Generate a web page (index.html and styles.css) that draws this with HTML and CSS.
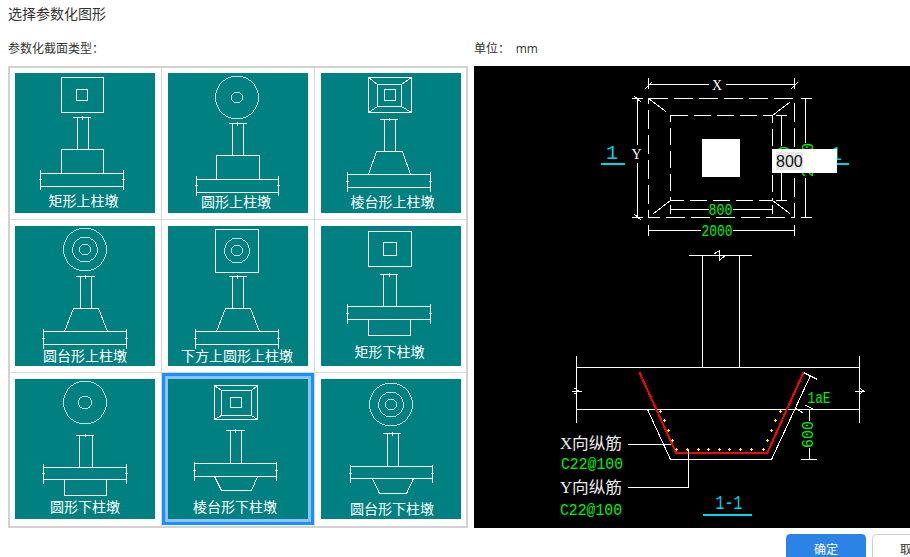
FILE: index.html
```html
<!DOCTYPE html>
<html lang="zh-CN">
<head>
<meta charset="utf-8">
<title>选择参数化图形</title>
<link rel="stylesheet" href="styles.css">
</head>
<body>
<div class="dialog">
  <div class="title">选择参数化图形</div>
  <div class="main">
    <section class="left">
      <div class="label">参数化截面类型<span class="colon">：</span></div>
      <div class="grid">
        <div class="cell"><div class="tile"><svg class="art" viewBox="0 0 140 140" width="140" height="140">
          <path class="cad" d="M46.5 4.5h42v35h-42z M61.5 16.5h11v11h-11z M58 44.5h18 M67 43v4 M62.5 44.5v32 M73.5 44.5v32 M46.5 76.5h42v24h-42z M25.5 100.5h83v13h-83z M25.5 97v20 M108.5 97v20 M24 106.5h3 M107 106.5h3"/>
          <text class="cap" x="68.5" y="127">矩形上柱墩</text></svg></div></div>
        <div class="cell"><div class="tile"><svg class="art" viewBox="0 0 140 140" width="140" height="140">
          <circle class="cad ring" cx="69" cy="24.5" r="21.5"/><circle class="cad ring" cx="69" cy="24.5" r="5.5"/>
          <path class="cad" d="M60.5 50.5h18 M69.5 49v4 M64.5 50.5v32 M75.5 50.5v32 M48.5 82.5h43v24h-43z M28.5 106.5h82v13h-82z M28.5 103v20 M110.5 103v20 M27 112.5h3 M109 112.5h3"/>
          <text class="cap" x="68" y="128">圆形上柱墩</text></svg></div></div>
        <div class="cell"><div class="tile"><svg class="art" viewBox="0 0 140 140" width="140" height="140">
          <path class="cad" d="M47.5 4.5h43v35h-43z M56.5 11.5h24v22h-24z M63.5 16.5h11v11h-11z M47.5 4.5l9 7 M90.5 4.5l-10 7 M47.5 39.5l9-6 M90.5 39.5l-10-6 M59 46.5h18 M68 45v3 M63.5 46.5v32 M74.5 46.5v32 M55.5 78.5h26l8 23h-42z M26.5 101.5h83v13h-83z M26.5 99v20 M109.5 99v20 M25 108.5h3 M108 108.5h3"/>
          <text class="cap" x="71.5" y="128">棱台形上柱墩</text></svg></div></div>

        <div class="cell"><div class="tile"><svg class="art" viewBox="0 0 140 140" width="140" height="140">
          <circle class="cad ring" cx="70" cy="23.5" r="21.5"/><circle class="cad ring" cx="70" cy="23.5" r="12.5"/><circle class="cad ring" cx="70" cy="23.5" r="5.5"/>
          <path class="cad" d="M61 50.5h19 M70.5 49v4 M65.5 50.5v32 M76.5 50.5v32 M58.5 82.5h25l9 23h-43z M28.5 105.5h83v13h-83z M28.5 103v20 M111.5 103v20 M27 112.5h3 M110 112.5h3"/>
          <text class="cap" x="70" y="129">圆台形上柱墩</text></svg></div></div>
        <div class="cell"><div class="tile"><svg class="art" viewBox="0 0 140 140" width="140" height="140">
          <path class="cad" d="M47.5 3.5h43v43h-43z"/>
          <circle class="cad ring" cx="69" cy="24.5" r="12.5"/><circle class="cad ring" cx="69" cy="24.5" r="5.5"/>
          <path class="cad" d="M60.5 50.5h18 M69.5 49v4 M64.5 50.5v32 M75.5 50.5v32 M57.5 82.5h25l9 23h-43z M27.5 105.5h83v13h-83z M27.5 103v20 M110.5 103v20 M26 112.5h3 M109 112.5h3"/>
          <text class="cap" x="69" y="129">下方上圆形上柱墩</text></svg></div></div>
        <div class="cell"><div class="tile"><svg class="art" viewBox="0 0 140 140" width="140" height="140">
          <path class="cad" d="M47.5 5.5h43v35h-43z M62.5 16.5h13v13h-13z M59 48.5h18 M68 47v4 M62.5 48.5v32 M75.5 48.5v32 M26.5 80.5h83v13h-83z M26.5 77.5v20 M109.5 77.5v20 M25 87.5h3 M108 87.5h3 M47.5 93.5v16h42v-16"/>
          <text class="cap" x="68.5" y="125">矩形下柱墩</text></svg></div></div>

        <div class="cell"><div class="tile"><svg class="art" viewBox="0 0 140 140" width="140" height="140">
          <circle class="cad ring" cx="70" cy="23.5" r="21.5"/><circle class="cad ring" cx="70" cy="23.5" r="6.5"/>
          <path class="cad" d="M61 56.5h18 M70 55v3 M64.5 56.5v32 M77.5 56.5v32 M28.5 88.5h83v12h-83z M28.5 84.5v20 M111.5 84.5v20 M27 94.5h3 M110 94.5h3 M49.5 100.5v16h42v-16"/>
          <text class="cap" x="70" y="127">圆形下柱墩</text></svg></div></div>
        <div class="cell"><div class="tile selected"><svg class="art" viewBox="0 0 140 140" width="140" height="140">
          <path class="cad" d="M46.5 6.5h43v34h-43z M53.5 11.5h30v25h-30z M62.5 18.5h11v10h-11z M46.5 6.5l7 5 M89.5 6.5l-6 5 M46.5 40.5l7-4 M89.5 40.5l-6-4 M58 51.5h19 M67.5 50v4 M62.5 51.5v33 M73.5 51.5v33 M26.5 84.5h82v13h-82z M26.5 82.5v19 M108.5 82.5v19 M25 91.5h3 M107 91.5h3 M46.5 97.5l7 14h30l6-14"/>
          <text class="cap" x="67" y="127">棱台形下柱墩</text></svg></div></div>
        <div class="cell"><div class="tile"><svg class="art" viewBox="0 0 140 140" width="140" height="140">
          <circle class="cad ring" cx="70" cy="25.5" r="21.5"/><circle class="cad ring" cx="70" cy="25.5" r="12.5"/><circle class="cad ring" cx="70" cy="25.5" r="5.5"/>
          <path class="cad" d="M62 54.5h18 M71 53v4 M66.5 54.5v33 M77.5 54.5v33 M29.5 87.5h82v12h-82z M29.5 85.5v18 M111.5 85.5v18 M28 94.5h3 M110 94.5h3 M51.5 99.5l7 15h27l7-15"/>
          <text class="cap" x="71" y="129">圆台形下柱墩</text></svg></div></div>
      </div>
    </section>
    <section class="right">
      <div class="label">单位<span class="colon">：</span> <span class="unit">mm</span></div>
      <svg class="preview" viewBox="474 66 436 462" width="436" height="462">
        <!-- plan view -->
        <path class="wire" d="M648.5 84.5h60 M725.5 84.5h69 M648.5 78v11 M794.5 78v11 M645 89l7-7 M791 89l7-7"/>
        <text class="serif" x="717" y="85">X</text>
        <path class="wire dash" d="M648.5 98.5h146v119h-146z"/>
        <path class="wire dash-small" d="M670.5 115.5h102v85h-102z"/>
        <path class="wire" d="M648.5 98.5l17.5 13 M790 102l-17.5 13.5 M670.5 200.5l-17 13 M772.5 200.5l17.5 13"/>
        <path class="wire" d="M637.5 98.5v46 M637.5 163v54.5 M632 98.5h11 M632 217.5h11 M634 96l7 6 M634 214l7 6"/>
        <text class="serif" x="636.5" y="154">Y</text>
        <path class="cyan" d="M601 164h24 M836.5 164h12.5"/>
        <text class="cyan-text" x="612" y="153">1</text>
        <text class="cyan-text" x="836" y="154">1</text>
        <path class="wire" d="M781 115.5v30 M781 172v28.500 M776 115.500h11 M776 200.500h11 M805.500 98.500v44 M805.500 178v39.500 M800.500 98.500h11 M800.500 217.500h11"/>
        <text class="green" transform="translate(784 159) rotate(-90)" x="0" y="0" textLength="26" lengthAdjust="spacingAndGlyphs">800</text>
        <text class="green" transform="translate(808 160) rotate(-90)" x="0" y="0" textLength="34" lengthAdjust="spacingAndGlyphs">2000</text>
        <rect class="fill-white" x="702" y="139" width="38" height="38"/>
        <rect class="fill-white" x="772" y="149" width="65" height="24"/>
        <rect class="fill-hl" x="776" y="152" width="27" height="18"/>
        <text class="input-text" x="776" y="161">800</text>
        <path class="wire" d="M670.500 209.500h38 M733 209.500h39.500 M670.500 205v9 M772.500 205v9"/>
        <text class="green" x="720.500" y="210" textLength="24" lengthAdjust="spacingAndGlyphs">800</text>
        <path class="wire" d="M648.500 230.500h52 M733 230.500h61.500 M648.500 225v11 M794.500 225v11"/>
        <text class="green" x="717" y="231" textLength="31" lengthAdjust="spacingAndGlyphs">2000</text>
        <!-- section view -->
        <path class="wire" d="M689 255.500h63 M702.500 255.500v112 M739.500 255.500v112 M714 254l5.500-3.500v10l5.500-5"/>
        <path class="wire" d="M576.500 367.500h283 M576.500 409.500h283 M576.500 356v67 M859.500 356v67 M572 391h10 M574 388l5 3-5 3 M855 391h10 M859 388l5 3-5 3"/>
        <path class="wire" d="M647.500 409.500l23 50h101l39-84 M803.500 372.500l14 7"/>
        <path class="red" d="M639.500 372.500l36.500 80h91.500l36-80"/>
        <path class="yellow" d="M659 411.500h3M660.500 410v3M663 420.500h3M664.500 419v3M667 430.500h3M668.500 429v3M671 440.500h3M672.500 439v3M675 449.500h3M676.500 448v3M686 449.500h3M687.500 448v3M697 449.500h3M698.500 448v3M707 449.500h3M708.500 448v3M718 449.500h3M719.500 448v3M728 449.500h3M729.500 448v3M739 449.500h3M740.500 448v3M750 449.500h3M751.500 448v3M762 449.500h3M763.500 448v3M766 440.500h3M767.500 439v3M770 430.500h3M771.500 429v3M774 420.500h3M775.500 419v3M779 411.500h3M780.500 410v3"/>
        <path class="wire" d="M627.500 444.500h43.500 M627.500 487.500h60.500v-38"/>
        <path class="wire" d="M809.500 409.500v11 M809.500 448v11.500 M800.500 459.500h16 M795 408l8 5 M805 405l8 4"/>
        <text class="green" transform="translate(808 434.500) rotate(-90)" x="0" y="0" textLength="27" lengthAdjust="spacingAndGlyphs">600</text>
        <text class="green" x="819" y="398" textLength="23" lengthAdjust="spacingAndGlyphs">1aE</text>
        <text class="note" x="591" y="443" textLength="62" lengthAdjust="spacingAndGlyphs">X向纵筋</text>
        <text class="green" x="592" y="464" textLength="62" lengthAdjust="spacingAndGlyphs">C22@100</text>
        <text class="note" x="591" y="487" textLength="62" lengthAdjust="spacingAndGlyphs">Y向纵筋</text>
        <text class="green" x="591" y="510" textLength="62" lengthAdjust="spacingAndGlyphs">C22@100</text>
        <text class="cyan-text" x="729" y="503" textLength="27" lengthAdjust="spacingAndGlyphs">1-1</text>
        <path class="cyan" d="M703 515h49"/>
      </svg>
    </section>
  </div>
  <div class="footer">
    <button class="btn primary">确定</button>
    <button class="btn">取消</button>
  </div>
</div>
</body>
</html>
```

FILE: styles.css
```css
* { box-sizing: border-box; }
html, body { margin: 0; padding: 0; background: #fff; }
body { width: 910px; height: 557px; overflow: hidden; font-family: "Noto Sans CJK SC", "Liberation Sans", sans-serif; color: #333; }
.dialog { width: 910px; height: 557px; overflow: hidden; display: flex; flex-direction: column; }
.title { height: 28px; line-height: 26px; font-size: 14px; padding-left: 8px; margin-bottom: 12px; flex: none; }
.main { display: flex; gap: 6px; padding-left: 8px; flex: none; }
.label { height: 16px; line-height: 16px; font-size: 12px; margin-bottom: 10px; white-space: pre; }
.colon { font-family: "Noto Sans CJK TC", sans-serif; }
.unit { margin-left: 3px; font-family: "Open Sans", "Liberation Sans", sans-serif; }
.left { width: 460px; flex: none; }
.right { width: 436px; flex: none; }
.grid { width: 460px; height: 462px; border: 2px solid #d2d2d2; display: grid; grid-template-columns: 152px 153px 151px; grid-template-rows: 152px 153px 153px; }
.cell { padding: 6px 0 0 6px; border-right: 1px solid #d6d6d6; border-bottom: 1px solid #d6d6d6; }
.cell:nth-child(3n+1) { padding-left: 5px; }
.cell:nth-child(3n) { border-right: 0; }
.cell:nth-child(-n+3) { padding-top: 5px; }
.cell:nth-child(n+7) { border-bottom: 0; }
.tile { width: 140px; height: 140px; background: #008080; }
.tile.selected { box-shadow: 0 0 0 3px #8cc4ff, 0 0 0 6px #1890ff; position: relative; }
.art { display: block; }
.cad { fill: none; stroke: #fff; stroke-width: 1; shape-rendering: crispEdges; }
.ring { stroke-width: 0.75; }
.cap { fill: #fff; font-size: 14px; text-anchor: middle; dominant-baseline: central; font-family: "Noto Sans CJK SC", sans-serif; }
.preview { display: block; background: #000; }
.wire { fill: none; stroke: #fff; stroke-width: 1; shape-rendering: crispEdges; }
.dash { stroke-dasharray: 19 6; }
.dash-small { stroke-dasharray: 17 6; }
.cyan { fill: none; stroke: #00d4e6; stroke-width: 2; shape-rendering: crispEdges; }
.red { fill: none; stroke: #f00; stroke-width: 2; shape-rendering: crispEdges; }
.yellow { fill: none; stroke: #ff0; stroke-width: 1; shape-rendering: crispEdges; }
.serif { fill: #fff; font-family: "Liberation Serif", serif; font-size: 14px; text-anchor: middle; dominant-baseline: central; }
.green { fill: #00f000; font-family: "Liberation Mono", monospace; font-size: 17px; text-anchor: middle; dominant-baseline: central; }
.cyan-text { fill: #00d4e6; font-family: "Liberation Mono", monospace; font-size: 20px; text-anchor: middle; dominant-baseline: central; }
.note { fill: #eee; font-family: "Liberation Serif", "Noto Sans CJK SC", serif; font-size: 16px; text-anchor: middle; dominant-baseline: central; }
.fill-white { fill: #fff; }
.fill-hl { fill: #e9e9e9; }
.input-text { fill: #111; font-family: "Liberation Sans", sans-serif; font-size: 16px; dominant-baseline: central; }
.footer { display: flex; justify-content: flex-end; gap: 6px; margin-top: 6px; margin-right: -42px; flex: none; }
.btn { width: 80px; height: 28px; flex: none; font: 12px "Noto Sans CJK SC", sans-serif; color: #333; background: #fff; border: 1px solid #d0d0d0; border-radius: 4px; padding: 0; }
.btn.primary { background: #2b83e6; border-color: #2b83e6; color: #fff; }
```
